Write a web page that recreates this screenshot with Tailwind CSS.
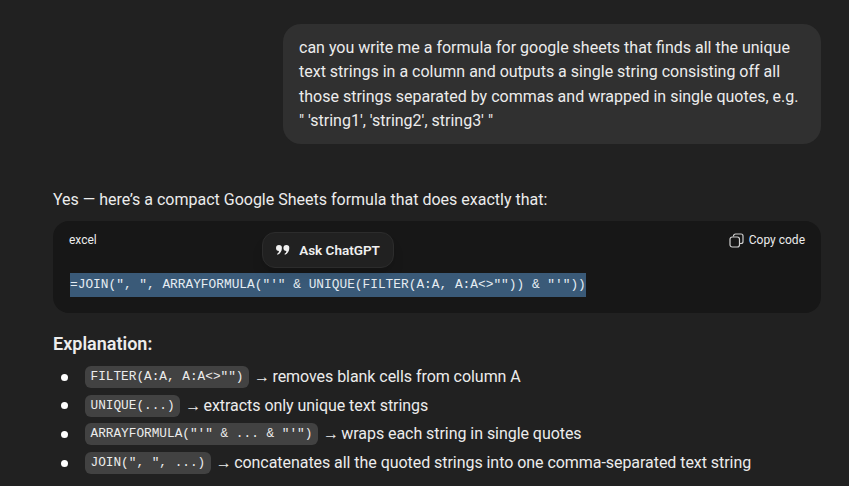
<!DOCTYPE html>
<html><head><meta charset="utf-8"><script src="https://cdn.jsdelivr.net/npm/@tailwindcss/browser@4"></script></head>
<body class="bg-[#212121] overflow-hidden">
<div class="relative w-[849px] h-[486px] overflow-hidden pl-[53px] pr-[28px] pt-[24px] font-['Roboto',sans-serif] text-[16px] leading-[24.3px] text-[#ececec]">
  <div class="ml-[230px] bg-[#303030] rounded-[18px] h-[120px] px-4 py-3 whitespace-nowrap">
    <div>can you write me a formula for google sheets that finds all the unique</div>
    <div>text strings in a column and outputs a single string consisting off all</div>
    <div>those strings separated by commas and wrapped in single quotes, e.g.</div>
    <div>" 'string1', 'string2', string3' "</div>
  </div>
  <p class="mt-[44px] leading-6">Yes — here’s a compact Google Sheets formula that does exactly that:</p>
  <div class="mt-[9px] h-[92px] bg-[#171717] rounded-2xl px-4 pt-[9px]">
    <div class="flex justify-between items-center h-5 text-[12px]">
      <span>excel</span>
      <span class="flex items-center gap-[5px]"><svg class="w-[15px] h-[15px] text-[#cfcfcf]" viewBox="0 0 15 15" fill="none" stroke="currentColor" stroke-width="1.2"><rect x="1" y="4" width="9.5" height="10" rx="2.2"/><path d="M4.5 3.6V3a2 2 0 0 1 2-2H12a2 2 0 0 1 2 2v5.5a2 2 0 0 1-2 2h-1"/></svg>Copy code</span>
    </div>
    <div class="mt-[23px] ml-px w-max bg-[#3a5a78] h-6 leading-6 font-['Liberation_Mono',monospace] text-[12.83px] text-[#e6edf3]">=JOIN(", ", ARRAYFORMULA("'" &amp; UNIQUE(FILTER(A:A, A:A&lt;&gt;"")) &amp; "'"))</div>
  </div>
  <h3 class="mt-[19px] text-[18px] leading-6 font-semibold">Explanation:</h3>
  <ul class="mt-[7px] pl-2">
    <li class="h-[28.6px] flex items-center"><span class="w-[7px] h-[7px] rounded-full bg-white mr-[17px]"></span><code class="font-['Liberation_Mono',monospace] text-[12.75px] leading-5 bg-[#424242] rounded-md px-[5.5px] py-px">FILTER(A:A, A:A&lt;&gt;"")</code><span class="ml-[5px] tracking-[-0.05px]"><span class="mr-[-1.5px]">→</span> removes blank cells from column A</span></li>
    <li class="h-[28.6px] flex items-center"><span class="w-[7px] h-[7px] rounded-full bg-white mr-[17px]"></span><code class="font-['Liberation_Mono',monospace] text-[12.75px] leading-5 bg-[#424242] rounded-md px-[5.5px] py-px">UNIQUE(...)</code><span class="ml-[5px] tracking-[-0.05px]"><span class="mr-[-1.5px]">→</span> extracts only unique text strings</span></li>
    <li class="h-[28.6px] flex items-center"><span class="w-[7px] h-[7px] rounded-full bg-white mr-[17px]"></span><code class="font-['Liberation_Mono',monospace] text-[12.75px] leading-5 bg-[#424242] rounded-md px-[5.5px] py-px">ARRAYFORMULA("'" &amp; ... &amp; "'")</code><span class="ml-[5px] tracking-[-0.05px]"><span class="mr-[-1.5px]">→</span> wraps each string in single quotes</span></li>
    <li class="h-[28.6px] flex items-center"><span class="w-[7px] h-[7px] rounded-full bg-white mr-[17px]"></span><code class="font-['Liberation_Mono',monospace] text-[12.75px] leading-5 bg-[#424242] rounded-md px-[5.5px] py-px">JOIN(", ", ...)</code><span class="ml-[5px] tracking-[-0.05px]"><span class="mr-[-1.5px]">→</span> concatenates all the quoted strings into one comma-separated text string</span></li>
  </ul>
  <div class="absolute left-[262px] top-[232px] w-[132px] h-[36px] flex items-center justify-center gap-[9px] rounded-[13px] bg-[#212121] border border-[#2c2c2c] shadow-lg text-[13.5px] font-semibold text-[#f0f0f0]">
    <svg class="w-[14px] h-[10px]" viewBox="0 0 14 10" fill="currentColor"><path d="M3 0a2.9 2.9 0 0 1 2.9 3C5.9 6 4.4 8.6 1.6 9.8L1 9c1.2-.8 1.9-1.8 2-3A2.9 2.9 0 0 1 3 0Z"/><path d="M10.4 0a2.9 2.9 0 0 1 2.9 3c0 3-1.5 5.6-4.3 6.8L8.4 9c1.2-.8 1.9-1.8 2-3a2.9 2.9 0 0 1 0-6Z"/></svg>
    <span>Ask ChatGPT</span>
  </div>
</div>
</body></html>
